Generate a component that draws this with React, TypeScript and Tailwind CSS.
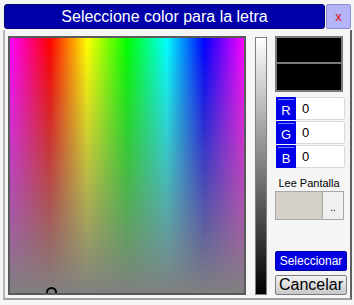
import React from 'react';

function ChannelRow({ label, value }: { label: string; value: number }) {
  return (
    <div className="flex h-[23px] w-[69px]">
      <div className="flex w-[20px] flex-col bg-[#0000e8]">
        <div className="mx-[2px] mt-[2px] h-[1px] bg-[#7d7dff]" />
        <div className="flex flex-1 items-center justify-center text-[13px] leading-none text-white">{label}</div>
      </div>
      <div className="flex flex-1 items-center rounded-r-[3px] border border-l-0 border-[#d8d8d8] bg-white pl-[6px] text-[13px] leading-none text-black">
        {value}
      </div>
    </div>
  );
}

export default function App() {
  return (
    <div className="h-[305px] w-[354px] overflow-hidden bg-[#f5f5f5] font-['Liberation_Sans',Arial,sans-serif]">
      {/* Title bar */}
      <div className="flex h-[30px] pl-[4px] pt-[4px]">
        <div className="flex h-[25px] w-[321px] items-center justify-center rounded-[3px] border border-[#00006e] bg-[#0000aa] text-[16px] text-white">
          Seleccione color para la letra
        </div>
        <div className="ml-[1px] flex h-[25px] w-[25px] items-center justify-center rounded-[2px] border border-[#8c8cd0] bg-[#b4b4f8] text-[13px] text-[#e01010]">
          x
        </div>
      </div>

      {/* Body */}
      <div className="ml-[3px] mr-[2px] flex h-[270px] border-b-2 border-l-2 border-r-2 border-b-[#a0a0a0] border-l-[#b4b4b4] border-r-[#606060] pl-[3px] pt-[6px]">
        {/* Spectrum */}
        <div className="relative h-[259px] w-[238px] overflow-hidden border-2 border-[#5a5a5a] bg-[linear-gradient(to_right,#ff00ff_0%,#ff0000_17%,#ffff00_33%,#00ff00_50%,#00ffff_67%,#0000ff_83%,#ff00ff_100%)]">
          <div className="absolute inset-0 bg-[linear-gradient(to_bottom,rgba(128,128,128,0)_0%,rgba(128,128,128,1)_100%)]" />
          <div className="absolute left-[36px] top-[249px] h-[11px] w-[11px] rounded-full border-2 border-black" />
        </div>

        {/* Luminance */}
        <div className="ml-[9px] mt-[1px] h-[258px] w-[12px] border border-[#808080] bg-[linear-gradient(to_bottom,#ffffff,#000000)]" />

        {/* Right column */}
        <div className="ml-[8px] flex w-[72px] flex-col">
          <div className="h-[28px] w-[68px] border-2 border-[#7a7a7a] bg-black" />
          <div className="h-[28px] w-[68px] border-2 border-t-0 border-[#7a7a7a] bg-black" />
          <div className="mt-[5px] flex flex-col gap-[1px] pl-[1px]">
            <ChannelRow label="R" value={0} />
            <ChannelRow label="G" value={0} />
            <ChannelRow label="B" value={0} />
          </div>
          <div className="mt-[9px] w-[68px] text-center text-[11px] leading-[13px] text-black">Lee Pantalla</div>
          <div className="mt-[1px] flex h-[29px] w-[69px]">
            <div className="w-[48px] border border-[#a8a8a8] bg-[#d4d0c8]" />
            <div className="flex flex-1 items-end justify-center border border-l-0 border-[#a8a8a8] bg-[#f0f0f0] pb-[6px] text-[10px] leading-none text-black">
              ..
            </div>
          </div>
          <button className="mt-[31px] flex h-[20px] w-[72px] items-center justify-center rounded-[2px] border border-[#00009c] bg-[#0000e0] text-[12px] leading-none text-white">
            Seleccionar
          </button>
          <button className="mt-[4px] flex h-[20px] w-[72px] items-center justify-center rounded-[2px] border border-[#7c7c7c] bg-[linear-gradient(to_bottom,#f4f4f4,#c8c8c8)] text-[16px] leading-none text-black">
            Cancelar
          </button>
        </div>
      </div>
    </div>
  );
}
